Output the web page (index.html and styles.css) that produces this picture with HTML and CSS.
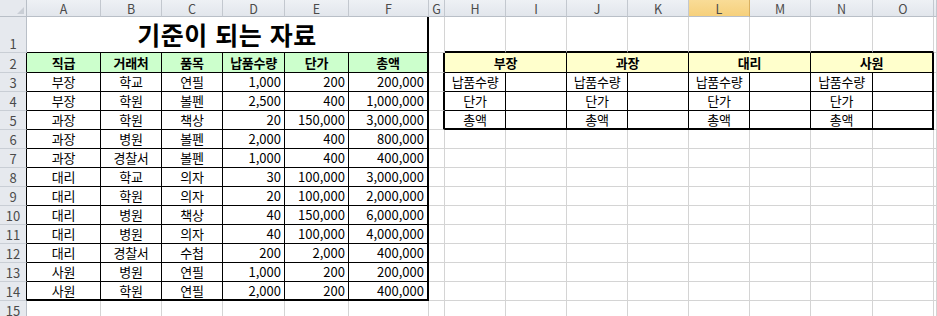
FILE: index.html
```html
<!DOCTYPE html>
<html lang="ko">
<head>
<meta charset="utf-8">
<link rel="stylesheet" href="styles.css">
</head>
<body>
<div class="sheet">
  <!-- column headers -->
  <div class="corner"><span class="tri"></span></div>
  <div class="ch">A</div><div class="ch">B</div><div class="ch">C</div><div class="ch">D</div><div class="ch">E</div><div class="ch">F</div><div class="ch">G</div><div class="ch">H</div><div class="ch">I</div><div class="ch">J</div><div class="ch">K</div><div class="ch sel">L</div><div class="ch">M</div><div class="ch">N</div><div class="ch">O</div><div class="ch"></div>

  <!-- row 1 -->
  <div class="rh">1</div>
  <div class="c title span6">기준이 되는 자료</div>
  <div class="c"></div>
  <div class="c t2top"></div><div class="c t2top"></div><div class="c t2top"></div><div class="c t2top"></div><div class="c t2top"></div><div class="c t2top"></div><div class="c t2top"></div><div class="c t2top"></div>
  <div class="c"></div>

  <!-- row 2 -->
  <div class="rh edge">2</div>
  <div class="c t1 head">직급</div><div class="c t1 head">거래처</div><div class="c t1 head">품목</div><div class="c t1 head">납품수량</div><div class="c t1 head">단가</div><div class="c t1 head t1r">총액</div>
  <div class="c t2l"></div>
  <div class="c t2 yhead span2">부장</div><div class="c t2 yhead span2">과장</div><div class="c t2 yhead span2">대리</div><div class="c t2 yhead span2 t2r">사원</div>
  <div class="c"></div>

  <!-- row 3 -->
  <div class="rh edge">3</div>
  <div class="c t1">부장</div><div class="c t1">학교</div><div class="c t1">연필</div><div class="c t1 num">1,000</div><div class="c t1 num">200</div><div class="c t1 num t1r">200,000</div>
  <div class="c t2l"></div>
  <div class="c t2">납품수량</div><div class="c t2"></div><div class="c t2">납품수량</div><div class="c t2"></div><div class="c t2">납품수량</div><div class="c t2"></div><div class="c t2">납품수량</div><div class="c t2 t2r"></div>
  <div class="c"></div>

  <!-- row 4 -->
  <div class="rh edge">4</div>
  <div class="c t1">부장</div><div class="c t1">학원</div><div class="c t1">볼펜</div><div class="c t1 num">2,500</div><div class="c t1 num">400</div><div class="c t1 num t1r">1,000,000</div>
  <div class="c t2l"></div>
  <div class="c t2">단가</div><div class="c t2"></div><div class="c t2">단가</div><div class="c t2"></div><div class="c t2">단가</div><div class="c t2"></div><div class="c t2">단가</div><div class="c t2 t2r"></div>
  <div class="c"></div>

  <!-- row 5 -->
  <div class="rh edge">5</div>
  <div class="c t1">과장</div><div class="c t1">학원</div><div class="c t1">책상</div><div class="c t1 num">20</div><div class="c t1 num">150,000</div><div class="c t1 num t1r">3,000,000</div>
  <div class="c t2l"></div>
  <div class="c t2 t2b">총액</div><div class="c t2 t2b"></div><div class="c t2 t2b">총액</div><div class="c t2 t2b"></div><div class="c t2 t2b">총액</div><div class="c t2 t2b"></div><div class="c t2 t2b">총액</div><div class="c t2 t2b t2r"></div>
  <div class="c"></div>

  <!-- row 6 -->
  <div class="rh edge">6</div>
  <div class="c t1">과장</div><div class="c t1">병원</div><div class="c t1">볼펜</div><div class="c t1 num">2,000</div><div class="c t1 num">400</div><div class="c t1 num t1r">800,000</div>
  <div class="c"></div><div class="c"></div><div class="c"></div><div class="c"></div><div class="c"></div><div class="c"></div><div class="c"></div><div class="c"></div><div class="c"></div><div class="c"></div>

  <!-- row 7 -->
  <div class="rh edge">7</div>
  <div class="c t1">과장</div><div class="c t1">경찰서</div><div class="c t1">볼펜</div><div class="c t1 num">1,000</div><div class="c t1 num">400</div><div class="c t1 num t1r">400,000</div>
  <div class="c"></div><div class="c"></div><div class="c"></div><div class="c"></div><div class="c"></div><div class="c"></div><div class="c"></div><div class="c"></div><div class="c"></div><div class="c"></div>

  <!-- row 8 -->
  <div class="rh edge">8</div>
  <div class="c t1">대리</div><div class="c t1">학교</div><div class="c t1">의자</div><div class="c t1 num">30</div><div class="c t1 num">100,000</div><div class="c t1 num t1r">3,000,000</div>
  <div class="c"></div><div class="c"></div><div class="c"></div><div class="c"></div><div class="c"></div><div class="c"></div><div class="c"></div><div class="c"></div><div class="c"></div><div class="c"></div>

  <!-- row 9 -->
  <div class="rh edge">9</div>
  <div class="c t1">대리</div><div class="c t1">학원</div><div class="c t1">의자</div><div class="c t1 num">20</div><div class="c t1 num">100,000</div><div class="c t1 num t1r">2,000,000</div>
  <div class="c"></div><div class="c"></div><div class="c"></div><div class="c"></div><div class="c"></div><div class="c"></div><div class="c"></div><div class="c"></div><div class="c"></div><div class="c"></div>

  <!-- row 10 -->
  <div class="rh edge">10</div>
  <div class="c t1">대리</div><div class="c t1">병원</div><div class="c t1">책상</div><div class="c t1 num">40</div><div class="c t1 num">150,000</div><div class="c t1 num t1r">6,000,000</div>
  <div class="c"></div><div class="c"></div><div class="c"></div><div class="c"></div><div class="c"></div><div class="c"></div><div class="c"></div><div class="c"></div><div class="c"></div><div class="c"></div>

  <!-- row 11 -->
  <div class="rh edge">11</div>
  <div class="c t1">대리</div><div class="c t1">병원</div><div class="c t1">의자</div><div class="c t1 num">40</div><div class="c t1 num">100,000</div><div class="c t1 num t1r">4,000,000</div>
  <div class="c"></div><div class="c"></div><div class="c"></div><div class="c"></div><div class="c"></div><div class="c"></div><div class="c"></div><div class="c"></div><div class="c"></div><div class="c"></div>

  <!-- row 12 -->
  <div class="rh edge">12</div>
  <div class="c t1">대리</div><div class="c t1">경찰서</div><div class="c t1">수첩</div><div class="c t1 num">200</div><div class="c t1 num">2,000</div><div class="c t1 num t1r">400,000</div>
  <div class="c"></div><div class="c"></div><div class="c"></div><div class="c"></div><div class="c"></div><div class="c"></div><div class="c"></div><div class="c"></div><div class="c"></div><div class="c"></div>

  <!-- row 13 -->
  <div class="rh edge">13</div>
  <div class="c t1">사원</div><div class="c t1">병원</div><div class="c t1">연필</div><div class="c t1 num">1,000</div><div class="c t1 num">200</div><div class="c t1 num t1r">200,000</div>
  <div class="c"></div><div class="c"></div><div class="c"></div><div class="c"></div><div class="c"></div><div class="c"></div><div class="c"></div><div class="c"></div><div class="c"></div><div class="c"></div>

  <!-- row 14 -->
  <div class="rh edge">14</div>
  <div class="c t1 t1b">사원</div><div class="c t1 t1b">학원</div><div class="c t1 t1b">연필</div><div class="c t1 t1b num">2,000</div><div class="c t1 t1b num">200</div><div class="c t1 t1b num t1r">400,000</div>
  <div class="c"></div><div class="c"></div><div class="c"></div><div class="c"></div><div class="c"></div><div class="c"></div><div class="c"></div><div class="c"></div><div class="c"></div><div class="c"></div>

  <!-- row 15 -->
  <div class="rh">15</div>
  <div class="c"></div><div class="c"></div><div class="c"></div><div class="c"></div><div class="c"></div><div class="c"></div>
  <div class="c"></div><div class="c"></div><div class="c"></div><div class="c"></div><div class="c"></div><div class="c"></div><div class="c"></div><div class="c"></div><div class="c"></div><div class="c"></div>
</div>
</body>
</html>
```

FILE: styles.css
```css
html, body {
  margin: 0;
  padding: 0;
  background: #ffffff;
  overflow: hidden;
}

.sheet {
  display: grid;
  grid-template-columns: 27px 74px 61px 61px 62px 64px 80px 16px 61px 61px 61px 61px 61px 61px 62px 61px 1fr;
  grid-template-rows: 17px 36px 20px repeat(13, 19px);
  width: 937px;
  height: 316px;
  overflow: hidden;
  font-family: "Noto Sans CJK KR", "Noto Sans", sans-serif;
  font-size: 13px;
  color: #000;
}

.sheet > div {
  box-sizing: border-box;
  min-width: 0;
}

.corner {
  background: #e6e9ee;
  border-right: 1px solid #b9bfc7;
  border-bottom: 1px solid #b9bfc7;
  display: flex;
  align-items: flex-end;
  justify-content: flex-end;
  padding: 0 2px 2px 0;
}

.tri {
  width: 0;
  height: 0;
  border-left: 7px solid transparent;
  border-bottom: 7px solid #c9ced5;
}

.ch {
  background: linear-gradient(#eef1f5, #e2e6ec);
  border-right: 1px solid #c3c8cf;
  border-bottom: 1px solid #b9bfc7;
  color: #4b4b4b;
  display: flex;
  align-items: center;
  justify-content: center;
  font-size: 12.5px;
  line-height: 15px;
}

.ch.sel {
  background: linear-gradient(#f9dc97, #f6d07c);
  border-right-color: #d9b060;
}

.rh {
  background: #e6e9ee;
  border-right: 1px solid #b9bfc7;
  border-bottom: 1px solid #c9ced5;
  color: #4b4b4b;
  display: flex;
  align-items: flex-end;
  justify-content: center;
  font-size: 13px;
  line-height: 15px;
  padding-bottom: 1px;
}

.rh.edge {
  border-right-color: #000;
}

.c {
  border-right: 1px solid #d4d4d4;
  border-bottom: 1px solid #d4d4d4;
  display: flex;
  align-items: center;
  justify-content: center;
  line-height: 16px;
  white-space: nowrap;
  overflow: hidden;
  letter-spacing: -0.3px;
}

.span6 { grid-column: span 6; }
.span2 { grid-column: span 2; }

.title {
  font-size: 25px;
  font-weight: 700;
  line-height: 30px;
  align-items: flex-end;
  padding-bottom: 3px;
  letter-spacing: 0.5px;
  border-right: 2px solid #000;
  border-bottom: 1px solid #000;
}

.t1 {
  border-right-color: #000;
  border-bottom-color: #000;
}

.t1r { border-right: 2px solid #000; }
.t1b { border-bottom: 2px solid #000; }

.head {
  background: #ccffcc;
  font-weight: 700;
}

.num {
  justify-content: flex-end;
  padding-right: 3px;
  letter-spacing: 0;
}

.t2top { border-bottom: 2px solid #000; }
.t2l { border-right: 2px solid #000; }

.t2 {
  border-right-color: #000;
  border-bottom-color: #000;
}

.t2r { border-right: 2px solid #000; }
.t2b { border-bottom: 2px solid #000; }

.yhead {
  background: #ffffcc;
  font-weight: 700;
}
```
